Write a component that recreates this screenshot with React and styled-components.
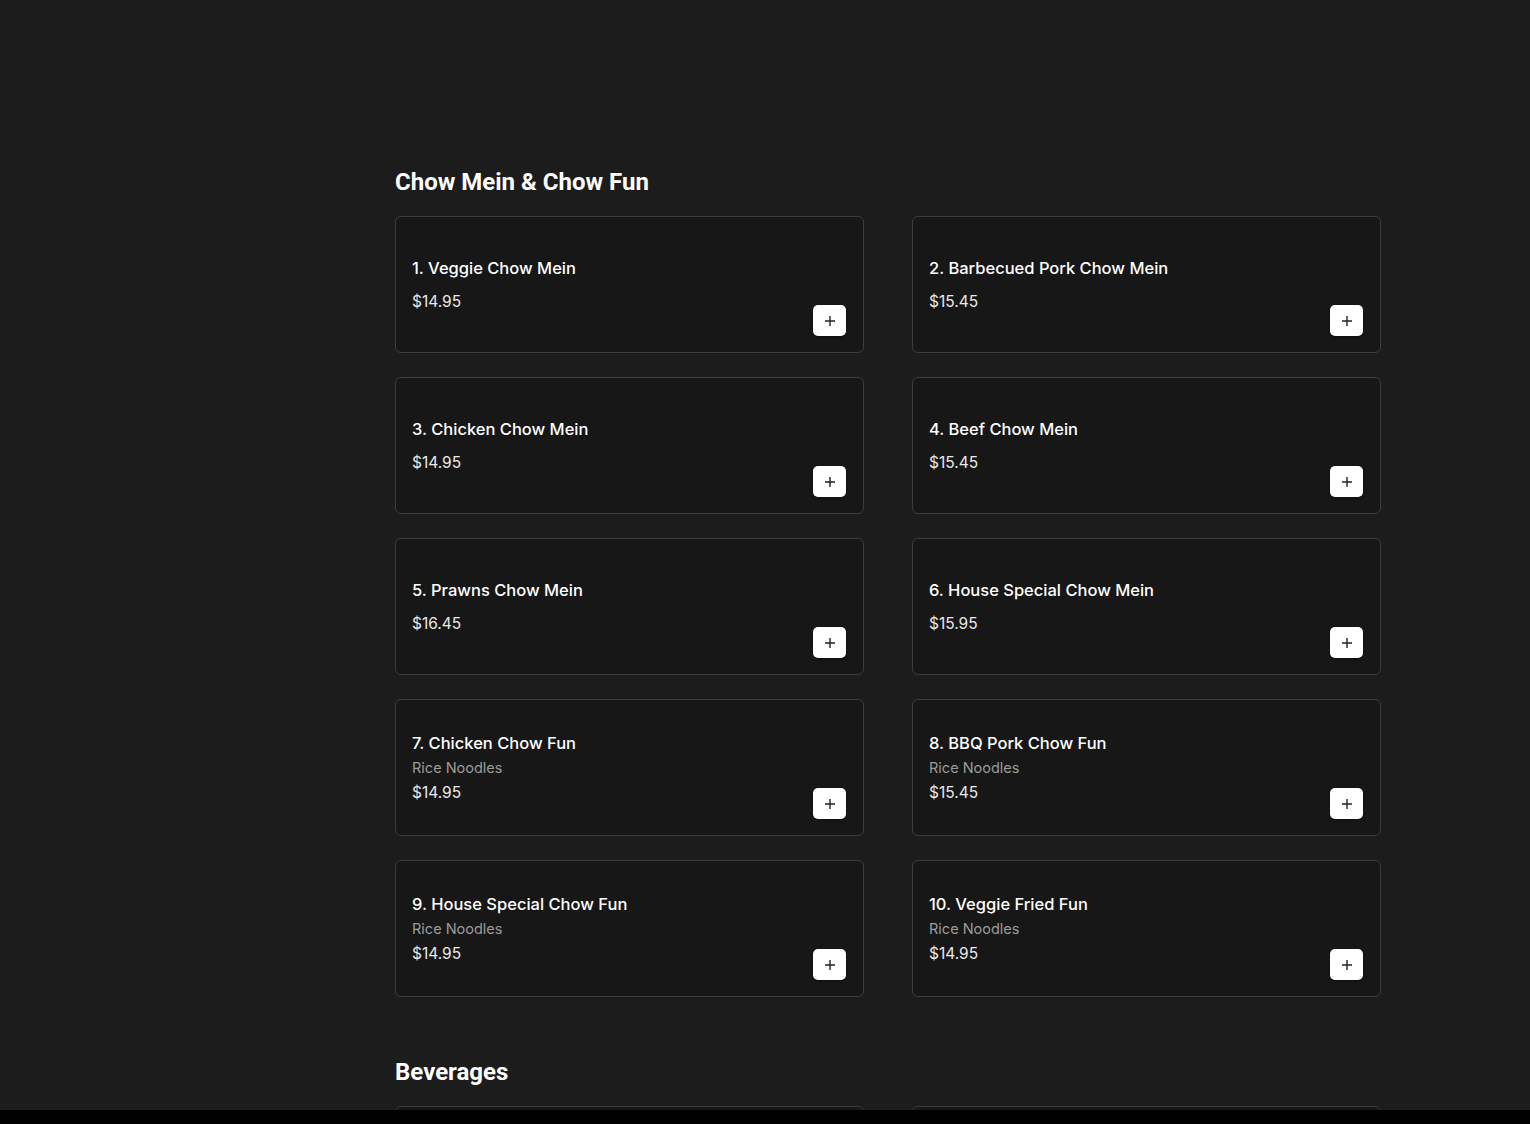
import React from 'react';
import styled, { createGlobalStyle } from 'styled-components';

const GlobalStyle = createGlobalStyle`
  html, body {
    margin: 0;
    padding: 0;
    background: #1c1c1c;
    color: #ffffff;
    font-family: "Inter", "Open Sans", sans-serif;
    overflow: hidden;
  }
`;

const Page = styled.div`
  min-height: 100vh;
  padding: 166px 0 0 395px;
  box-sizing: border-box;
`;

const Menu = styled.main`
  width: 986px;
`;

const Section = styled.section`
  margin-bottom: 59px;
`;

const SectionTitle = styled.h2`
  font-family: "Roboto", "Liberation Sans", sans-serif;
  font-weight: 700;
  font-size: 24px;
  line-height: 32px;
  margin: 0 0 18px;
  color: #ffffff;
`;

const Grid = styled.div`
  display: grid;
  grid-template-columns: 1fr 1fr;
  column-gap: 48px;
  row-gap: 24px;
`;

const Card = styled.article`
  height: 137px;
  box-sizing: border-box;
  border: 1px solid #3d3d3d;
  border-radius: 6px;
  background: #171717;
  padding: 16px 17px 16px 16px;
  display: flex;
  justify-content: space-between;
`;

const Info = styled.div`
  display: flex;
  flex-direction: column;
  justify-content: center;
`;

const Name = styled.h3`
  margin: 0;
  font-size: 16.5px;
  font-weight: 500;
  line-height: 22px;
  color: #ffffff;
`;

const Desc = styled.p`
  margin: 4px 0 0;
  font-size: 14.5px;
  line-height: 20px;
  color: #9c9c9c;
`;

const Price = styled.span`
  margin-top: ${p => (p.$tight ? '4px' : '12px')};
  font-size: 15.5px;
  line-height: 22px;
  color: #e9e9e9;
`;

const AddButton = styled.button`
  align-self: flex-end;
  width: 33px;
  height: 31px;
  border: none;
  border-radius: 5px;
  background: #ffffff;
  box-shadow: 0 1px 3px rgba(0, 0, 0, 0.4);
  display: flex;
  align-items: center;
  justify-content: center;
  padding: 0;
  cursor: pointer;
`;

const BottomBar = styled.div`
  position: fixed;
  left: 0;
  right: 0;
  bottom: 0;
  height: 14px;
  background: #000000;
`;

const PlusIcon = () => (
  <svg width="12" height="12" viewBox="0 0 12 12">
    <path d="M6 1v10M1 6h10" stroke="#222" strokeWidth="1.4" />
  </svg>
);

const chowMein = [
  { name: '1. Veggie Chow Mein', price: '$14.95' },
  { name: '2. Barbecued Pork Chow Mein', price: '$15.45' },
  { name: '3. Chicken Chow Mein', price: '$14.95' },
  { name: '4. Beef Chow Mein', price: '$15.45' },
  { name: '5. Prawns Chow Mein', price: '$16.45' },
  { name: '6. House Special Chow Mein', price: '$15.95' },
  { name: '7. Chicken Chow Fun', desc: 'Rice Noodles', price: '$14.95' },
  { name: '8. BBQ Pork Chow Fun', desc: 'Rice Noodles', price: '$15.45' },
  { name: '9. House Special Chow Fun', desc: 'Rice Noodles', price: '$14.95' },
  { name: '10. Veggie Fried Fun', desc: 'Rice Noodles', price: '$14.95' },
];

const beverages = [
  { name: 'Coke', price: '$2.50' },
  { name: 'Sprite', price: '$2.50' },
];

function ItemCard({ item }) {
  return (
    <Card>
      <Info>
        <Name>{item.name}</Name>
        {item.desc && <Desc>{item.desc}</Desc>}
        <Price $tight={!!item.desc}>{item.price}</Price>
      </Info>
      <AddButton aria-label="Add">
        <PlusIcon />
      </AddButton>
    </Card>
  );
}

export default function App() {
  return (
    <>
      <GlobalStyle />
      <Page>
        <Menu>
          <Section>
            <SectionTitle>Chow Mein &amp; Chow Fun</SectionTitle>
            <Grid>
              {chowMein.map(item => (
                <ItemCard key={item.name} item={item} />
              ))}
            </Grid>
          </Section>
          <Section>
            <SectionTitle>Beverages</SectionTitle>
            <Grid>
              {beverages.map(item => (
                <ItemCard key={item.name} item={item} />
              ))}
            </Grid>
          </Section>
        </Menu>
      </Page>
      <BottomBar />
    </>
  );
}
